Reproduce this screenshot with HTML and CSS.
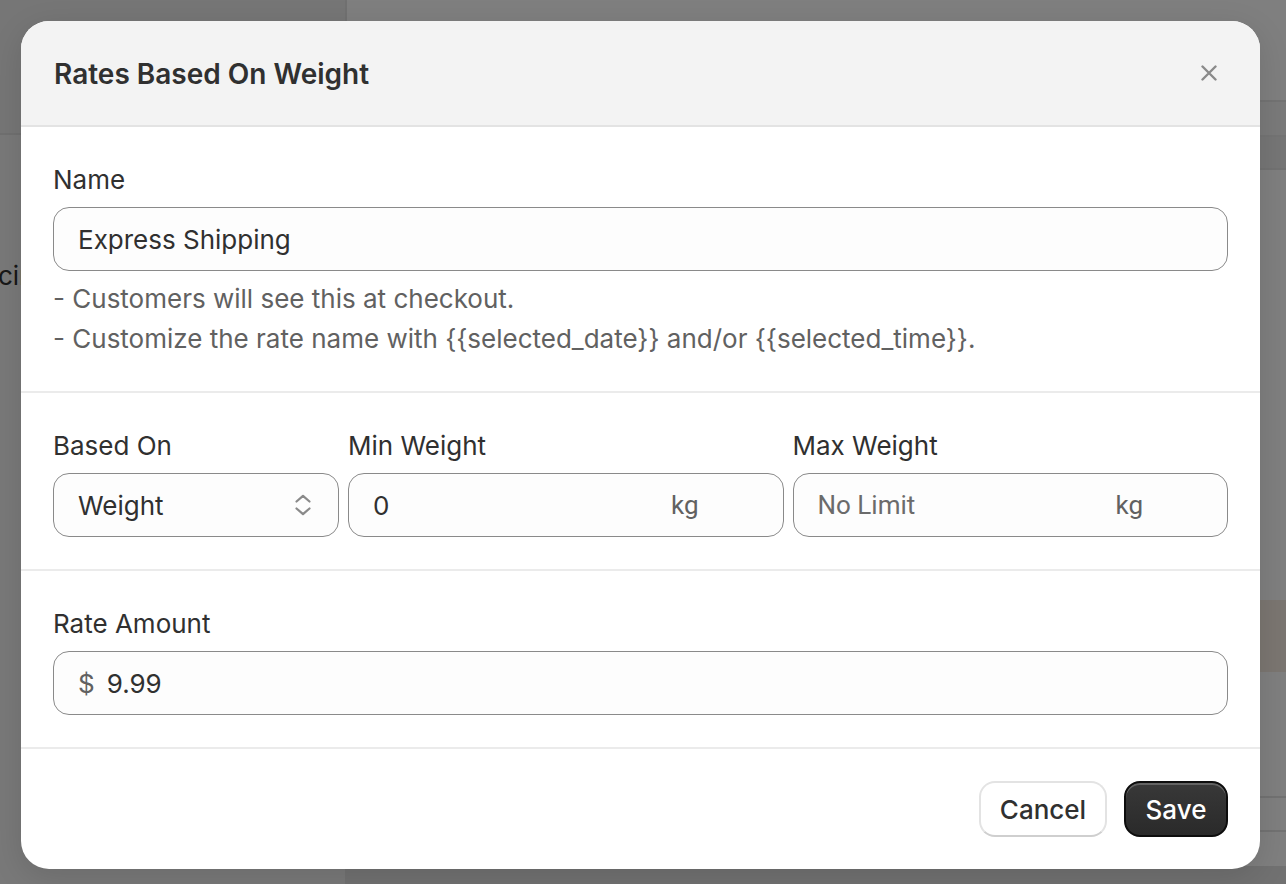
FILE: index.html
```html
<!DOCTYPE html>
<html lang="en">
<head>
<meta charset="utf-8">
<title>Rates Based On Weight</title>
<link rel="stylesheet" href="styles.css">
</head>
<body>
<div class="page">
  <aside class="sidebar">
    <div class="side-top"></div>
    <div class="side-item">cir</div>
  </aside>
  <main class="main">
    <div class="m-top"></div>
    <div class="m-row a"></div>
    <div class="m-row b"></div>
    <div class="m-space s1"></div>
    <div class="m-band"></div>
    <div class="m-space s2"></div>
    <div class="m-row c"></div>
    <div class="m-space s3"></div>
    <div class="m-bottom"></div>
  </main>
</div>
<div class="overlay"></div>

<div class="modal" role="dialog" aria-labelledby="modal-title">
  <header class="modal-header">
    <h2 id="modal-title" class="modal-title">Rates Based On Weight</h2>
    <button class="close-btn" aria-label="Close">
      <svg width="16" height="16" viewBox="0 0 16 16" fill="none" stroke="#8a8a8a" stroke-width="2.4" stroke-linecap="round"><path d="M1.5 1.5L14.5 14.5M14.5 1.5L1.5 14.5"/></svg>
    </button>
  </header>

  <section class="section">
    <label class="label">Name</label>
    <div class="field"><span class="value">Express Shipping</span></div>
    <div class="help">
      <div>- Customers will see this at checkout.</div>
      <div>- Customize the rate name with {{selected_date}} and/or {{selected_time}}.</div>
    </div>
  </section>

  <section class="section">
    <div class="row3">
      <div class="col">
        <label class="label">Based On</label>
        <div class="field select"><span class="value">Weight</span>
          <svg class="chev" width="18" height="22" viewBox="0 0 18 22" fill="none" stroke="#8a8a8a" stroke-width="2.2" stroke-linecap="round" stroke-linejoin="round"><path d="M2.5 7.5L9 1.8L15.5 7.5M2.5 14.5L9 20.2L15.5 14.5"/></svg>
        </div>
      </div>
      <div class="col">
        <label class="label">Min Weight</label>
        <div class="field"><span class="value grow">0</span><span class="suffix">kg</span></div>
      </div>
      <div class="col">
        <label class="label">Max Weight</label>
        <div class="field"><span class="placeholder grow">No Limit</span><span class="suffix">kg</span></div>
      </div>
    </div>
  </section>

  <section class="section">
    <label class="label">Rate Amount</label>
    <div class="field"><span class="prefix">$</span><span class="value">9.99</span></div>
  </section>

  <footer class="modal-footer">
    <button class="btn btn-secondary">Cancel</button>
    <button class="btn btn-primary">Save</button>
  </footer>
</div>
</body>
</html>
```
FILE: styles.css
```css
* { box-sizing: border-box; }
html, body { margin: 0; padding: 0; }
body {
  width: 1286px;
  height: 884px;
  overflow: hidden;
  background: #ffffff;
  font-family: "Inter", "Noto Sans", sans-serif;
  color: #303030;
  position: relative;
}

/* underlying page */
.page { display: flex; height: 884px; }
.sidebar {
  width: 347px;
  flex: none;
  background: #f2f2f2;
  border-right: 2px solid #e2e2e2;
}
.side-top { height: 135px; background: #ededed; border-bottom: 2px solid #e0e0e0; }
.side-item {
  margin-top: 125px;
  font-size: 26px;
  line-height: 32px;
  text-indent: -2px;
  white-space: nowrap;
  color: #303030;
}
.main { flex: 1; display: flex; flex-direction: column; }
.m-top { height: 102px; border-bottom: 2px solid #e6e6e6; }
.m-row.a { height: 35px; background: #f4f4f4; border-bottom: 2px solid #e8e8e8; }
.m-row.b { height: 33px; background: #ececec; border-bottom: 2px solid #e4e4e4; }
.m-space.s1 { height: 430px; }
.m-band { height: 72px; background: #f7ede2; }
.m-space.s2 { height: 126px; border-bottom: 2px solid #e4e4e4; }
.m-row.c { height: 34px; border-bottom: 2px solid #e4e4e4; }
.m-space.s3 { height: 34px; }
.m-bottom { flex: 1; background: #e2e2e2; }

.overlay {
  position: absolute;
  inset: 0;
  background: rgba(0, 0, 0, 0.5);
}

/* modal */
.modal {
  position: absolute;
  left: 21px;
  top: 21px;
  width: 1239px;
  background: #ffffff;
  border-radius: 28px;
  overflow: hidden;
  box-shadow: 0 8px 32px rgba(0, 0, 0, 0.12);
}
.modal-header {
  height: 106px;
  background: #f3f3f3;
  border-bottom: 2px solid #e3e3e3;
  display: flex;
  align-items: center;
  justify-content: space-between;
  padding: 0 32px 0 33px;
}
.modal-title {
  margin: 0;
  font-size: 28px;
  font-weight: 600;
  line-height: 38px;
  padding-top: 2px;
  color: #303030;
}
.close-btn {
  width: 38px;
  height: 38px;
  border: 0;
  background: transparent;
  padding: 0;
  display: flex;
  align-items: center;
  justify-content: center;
}

.section {
  padding: 32px;
  border-bottom: 2px solid #ebebeb;
}
.label {
  display: block;
  font-size: 26px;
  line-height: 40px;
  margin-bottom: 8px;
  color: #303030;
  padding-top: 1px;
  height: 40px;
}
.field {
  height: 64px;
  border: 1px solid #8a8a8a;
  border-radius: 16px;
  background: #fdfdfd;
  display: flex;
  align-items: center;
  padding: 0 24px;
  font-size: 26px;
}
.value { color: #303030; }
.grow { flex: 1; }
.placeholder {
  font-family: "Roboto", "Noto Sans", sans-serif;
  color: #6b6b6b;
  font-size: 26px;
}
.suffix {
  font-family: "Roboto", "Noto Sans", sans-serif;
  color: #616161;
  font-size: 26px;
  padding-right: 60px;
}
.prefix { color: #616161; margin-right: 12px; }
.select { justify-content: space-between; padding-right: 26px; }
.chev { display: block; }

.help {
  margin-top: 8px;
  font-size: 26px;
  line-height: 40px;
  color: #616161;
}

.row3 {
  display: grid;
  grid-template-columns: 286px 1fr 1fr;
  column-gap: 9px;
}

.modal-footer {
  display: flex;
  justify-content: flex-end;
  gap: 17px;
  padding: 32px;
}
.btn {
  height: 56px;
  border-radius: 16px;
  font-family: "Inter", "Noto Sans", sans-serif;
  font-size: 26px;
  font-weight: 500;
  padding: 0;
  display: flex;
  align-items: center;
  justify-content: center;
  cursor: pointer;
}
.btn-secondary {
  width: 128px;
  background: #ffffff;
  color: #303030;
  border: 2px solid #e3e3e3;
  border-bottom-color: #cfcfcf;
}
.btn-primary {
  width: 104px;
  background: linear-gradient(#383838, #2a2a2a);
  color: #ffffff;
  border: 2px solid #0d0d0d;
  box-shadow: inset 0 2px 0 rgba(255, 255, 255, 0.22);
}
```
